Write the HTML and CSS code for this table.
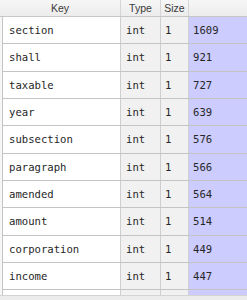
FILE: index.html
```html
<!DOCTYPE html>
<html>
<head>
<meta charset="utf-8">
<link rel="stylesheet" href="styles.css">
</head>
<body>
<div class="table">
  <div class="head">
    <div class="hcell key">Key</div>
    <div class="hcell type">Type</div>
    <div class="hcell size">Size</div>
    <div class="hcell val"></div>
  </div>
  <div class="body">
    <div class="row"><div class="c key">section</div><div class="c type">int</div><div class="c size">1</div><div class="c val">1609</div></div>
    <div class="row"><div class="c key">shall</div><div class="c type">int</div><div class="c size">1</div><div class="c val">921</div></div>
    <div class="row"><div class="c key">taxable</div><div class="c type">int</div><div class="c size">1</div><div class="c val">727</div></div>
    <div class="row"><div class="c key">year</div><div class="c type">int</div><div class="c size">1</div><div class="c val">639</div></div>
    <div class="row"><div class="c key">subsection</div><div class="c type">int</div><div class="c size">1</div><div class="c val">576</div></div>
    <div class="row"><div class="c key">paragraph</div><div class="c type">int</div><div class="c size">1</div><div class="c val">566</div></div>
    <div class="row"><div class="c key">amended</div><div class="c type">int</div><div class="c size">1</div><div class="c val">564</div></div>
    <div class="row"><div class="c key">amount</div><div class="c type">int</div><div class="c size">1</div><div class="c val">514</div></div>
    <div class="row"><div class="c key">corporation</div><div class="c type">int</div><div class="c size">1</div><div class="c val">449</div></div>
    <div class="row"><div class="c key">income</div><div class="c type">int</div><div class="c size">1</div><div class="c val">447</div></div>
    <div class="row partial"><div class="c key"></div><div class="c type"></div><div class="c size"></div><div class="c val"></div></div>
  </div>
  <div class="foot"></div>
</div>
</body>
</html>
```
FILE: styles.css
```css
html, body {
  margin: 0;
  padding: 0;
  background: #ffffff;
}
.table {
  width: 247px;
  height: 300px;
  overflow: hidden;
  display: flex;
  flex-direction: column;
}
.head {
  display: grid;
  grid-template-columns: 121px 40px 28px 1fr;
  height: 16px;
  border-bottom: 1px solid #c6c6c6;
  background: linear-gradient(#f6f6f6, #ececec);
  flex: none;
}
.hcell {
  font-family: "Liberation Sans", Arial, sans-serif;
  font-size: 10.5px;
  color: #3a3a3a;
  line-height: 16px;
  text-align: center;
  border-right: 1px solid #d6d6d6;
}
.hcell.val { border-right: none; }
.body {
  flex: 1;
  overflow: hidden;
  padding-left: 2px;
  background: #f6f6f6;
}
.row {
  display: grid;
  grid-template-columns: 118px 40px 28px 1fr;
  height: 27.33px;
  box-sizing: border-box;
  border-bottom: 1px solid #c4c4c4;
  border-left: 1px solid #c4c4c4;
}
.row.partial {
  height: 6px;
  border-bottom: none;
}
.c {
  font-family: "DejaVu Sans Mono", Menlo, monospace;
  font-size: 10.6px;
  color: #262626;
  display: flex;
  align-items: center;
  border-right: 1px solid #cfcfcf;
}
.c.key { background: #ffffff; padding-left: 6px; }
.c.type { background: #f1f1f1; padding-left: 5px; }
.c.size { background: #f1f1f1; padding-left: 4px; }
.c.val { background: #ccccff; padding-left: 4px; border-right: none; }
.foot {
  height: 4px;
  flex: none;
  background: #ececec;
  border-top: 1px solid #d4d4d4;
}
```
